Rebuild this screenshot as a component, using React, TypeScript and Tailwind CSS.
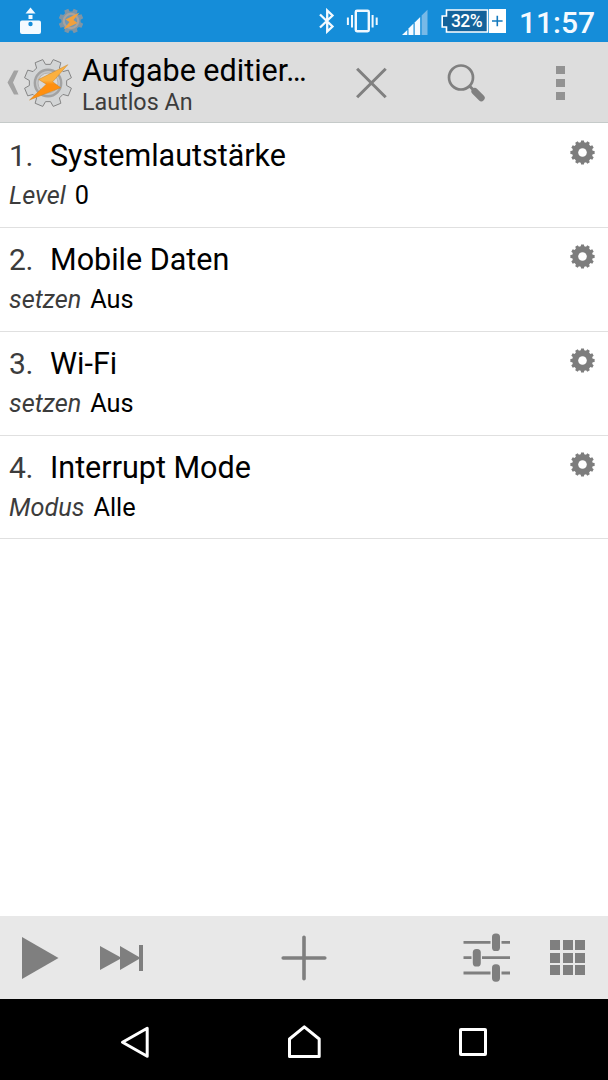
type Action = {
  title: string;
  label: string;
  value: string;
};

const actions: Action[] = [
  { title: "Systemlautstärke", label: "Level", value: "0" },
  { title: "Mobile Daten", label: "setzen", value: "Aus" },
  { title: "Wi-Fi", label: "setzen", value: "Aus" },
  { title: "Interrupt Mode", label: "Modus", value: "Alle" },
];

// outline of a cog wheel centred on 0,0
const cogPath = (teeth: number, outer: number, inner: number, offset = 0) => {
  const step = (Math.PI * 2) / teeth;
  const points: string[] = [];
  for (let i = 0; i < teeth; i++) {
    const a = i * step + offset;
    const corners = [
      [inner, -0.33],
      [outer, -0.22],
      [outer, 0.22],
      [inner, 0.33],
    ];
    corners.forEach(([r, t]) => {
      const x = r * Math.cos(a + t * step);
      const y = r * Math.sin(a + t * step);
      points.push(`${x.toFixed(2)} ${y.toFixed(2)}`);
    });
  }
  return `M${points.join("L")}Z`;
};

const TaskerLogo = ({ className }: { className: string }) => (
  <svg viewBox="-25 -25 50 50" className={className}>
    <defs>
      <linearGradient id="bolt" x1="0" y1="0" x2="0" y2="1">
        <stop offset="0.45" stopColor="#fbb040" />
        <stop offset="0.55" stopColor="#ff8f0f" />
      </linearGradient>
    </defs>
    <path
      d={cogPath(8, 24, 18.8, Math.PI / 8)}
      fill="#d3d5d6"
      stroke="#858585"
      strokeWidth="1"
      strokeLinejoin="round"
    />
    <circle r="13.2" fill="#c4c5c6" stroke="#a2a2a2" strokeWidth="2.4" />
    <circle r="10" fill="#d8d8d8" stroke="#b3b3b3" strokeWidth="1" />
    <path
      d="M19.8-18.3L-9.3-3.5L-1.7 1.2L-18.5 17L12.7 4.8L4.7-1.2Z"
      fill="url(#bolt)"
      stroke="#c98428"
      strokeWidth="0.5"
    />
  </svg>
);

const StatusBar = () => (
  <div className="flex h-[42px] items-center bg-[#158dd9] text-white">
    <svg viewBox="20 7 21 28" className="ml-5 h-7 w-[21px]" fill="#f4faff">
      <path d="M30.5 7.5L35.5 13.5H25.5Z" />
      <rect x="28.5" y="15" width="4" height="4" />
      <path
        fillRule="evenodd"
        d="M22 20.5H39Q41 20.5 41 22.5V32Q41 34 39 34H22Q20 34 20 32V22.5Q20 20.5 22 20.5ZM28.3 24A2.2 2.2 0 1 0 32.7 24A2.2 2.2 0 1 0 28.3 24Z"
      />
    </svg>
    <svg viewBox="-13 -13 26 26" className="ml-[17px] h-[26px] w-[26px]">
      <path d={cogPath(8, 12.5, 9.7, Math.PI / 8)} fill="#7f95a5" />
      <circle r="7.2" fill="#6f97b5" stroke="#a9a29c" strokeWidth="2.2" />
      <path d="M8.5-8.5L-5.5-1.5L-1.5 1L-7.5 8.5L6.5 2L2.5-1Z" fill="#f2a03c" />
    </svg>
    <svg
      viewBox="318 8 18 26"
      className="ml-[234px] h-[26px] w-[18px]"
      fill="none"
      stroke="#f4faff"
      strokeWidth="2.3"
    >
      <path d="M320 14.5L332.5 26.5L327.2 31.5V10.5L332.5 15.5L320 27.5" />
    </svg>
    <svg
      viewBox="346 8 33 26"
      className="ml-[10px] h-[26px] w-[33px]"
      fill="none"
      stroke="#f0f8ff"
      strokeWidth="2"
    >
      <rect x="355.8" y="10.8" width="13" height="20.5" rx="1.2" strokeWidth="2.4" />
      <path d="M347.9 17.5V25M352 15V27.5M372.6 15V27.5M376.7 17.5V25" />
    </svg>
    <svg viewBox="402 8 26 27" className="ml-[23px] h-[27px] w-[26px]" fill="#f4faff">
      <path d="M402 35L407.3 30V35Z" />
      <path d="M408.5 28.5L413.5 23.5V35H408.5Z" />
      <path d="M414.7 22.5L420.2 17V35H414.7Z" />
      <path d="M421.6 15.5L427.5 9.8V35H421.6Z" fill="#77b9e7" />
    </svg>
    <div className="relative ml-[13px] h-6 w-[65px]">
      <svg viewBox="441 9 65 24" className="h-6 w-[65px]">
        <path
          d="M446.5 10H487.5V32H446.5V27H442.2V16H446.5Z"
          fill="#14639b"
          stroke="white"
          strokeWidth="1.6"
        />
        <rect x="489" y="9" width="17" height="24" fill="white" />
        <path d="M492 21H502.6M497.3 15.7V26.3" stroke="#1479bd" strokeWidth="1.6" />
      </svg>
      <span className="absolute top-0 left-[10px] text-[17.5px] leading-6 font-medium tracking-[-0.6px]">
        32%
      </span>
    </div>
    <span className="ml-[13px] pt-[3px] text-[30px] leading-9 font-medium text-[#f4faff]">
      11:57
    </span>
  </div>
);

const Header = () => (
  <header className="flex h-[81px] items-center border-b border-[#c5cac9] bg-[#dddddd] pt-px">
    <svg viewBox="7 70 12 25" className="ml-[7px] h-[25px] w-3" fill="#a3a3a3">
      <path d="M14 70.5H18.5L13 82.5L18.5 94.5H14L7.5 82.5Z" />
    </svg>
    <TaskerLogo className="ml-1 h-[50px] w-[50px]" />
    <div className="ml-[9px] w-[240px] pt-[5px]">
      <h1 className="text-[30.5px] leading-[34px] whitespace-nowrap text-black">
        Aufgabe editier…
      </h1>
      <h2 className="text-[23.3px] leading-[29px] text-[#3c3c3c]">Lautlos An</h2>
    </div>
    <svg
      viewBox="0 0 32 32"
      className="ml-[33px] h-8 w-8"
      fill="none"
      stroke="#808080"
      strokeWidth="3"
    >
      <path d="M2.1 1.7L30.7 30.3M30.7 1.7L2.1 30.3" />
    </svg>
    <svg viewBox="447 63 39 39" className="ml-[60px] h-[39px] w-[39px]" fill="none" stroke="#808080">
      <circle cx="461" cy="77.5" r="12" strokeWidth="2.7" />
      <path d="M469.5 86L474 90.5" strokeWidth="3" />
      <path d="M474.8 91.3L481.3 97.8" strokeWidth="6.8" strokeLinecap="round" />
    </svg>
    <div className="ml-[70px] flex flex-col gap-[5px]">
      <span className="h-[8px] w-[9px] bg-[#929292]" />
      <span className="h-[8px] w-[9px] bg-[#929292]" />
      <span className="h-[8px] w-[9px] bg-[#929292]" />
    </div>
  </header>
);

const ActionRow = ({ action, index }: { action: Action; index: number }) => (
  <li className="flex h-[104px] justify-between border-b border-[#e0e0e0] pt-[13px] pr-[13px] pl-[9px] first:h-[105px] first:pt-[14px] last:h-[103px]">
    <div className="whitespace-nowrap">
      <div className="flex pt-px text-[30.5px] leading-9">
        <span className="w-[41px] text-[30px] tracking-[-0.4px] text-[#3c3c3c]">{index}.</span>
        <span className="text-black">{action.title}</span>
      </div>
      <div className="mt-[5px] flex gap-[9px] text-[25.3px] leading-[34px]">
        <span className="text-[#3c3c3c] italic">{action.label}</span>
        <span className="text-black">{action.value}</span>
      </div>
    </div>
    <svg viewBox="-12.5 -12.5 25 25" className="mt-[3px] h-[25px] w-[25px]">
      <path d={cogPath(12, 12.2, 10.3)} fill="#7d7d7d" />
      <circle r="4.3" fill="white" />
    </svg>
  </li>
);

const Toolbar = () => (
  <footer className="flex h-[83px] items-center bg-[#e8e8e8]">
    <svg viewBox="0 0 38 44" className="ml-[21px] h-11 w-[38px]" fill="#7f7f7f">
      <path d="M1 1L37.5 22L1 43Z" />
    </svg>
    <svg viewBox="0 0 44 28" className="ml-[41px] h-7 w-11" fill="#7f7f7f">
      <path d="M0 2L20 13V2L39 13V1H43V27H39V15L20 26V15L0 26Z" />
    </svg>
    <svg
      viewBox="0 0 46 46"
      className="ml-[137px] h-[46px] w-[46px]"
      stroke="#7f7f7f"
      strokeWidth="3.6"
      strokeLinecap="round"
    >
      <path d="M23 2.2V43.8M2.2 23H43.8" />
    </svg>
    <svg
      viewBox="463 933 48 50"
      className="ml-[136px] h-[50px] w-12"
      fill="#7f7f7f"
      stroke="#7f7f7f"
    >
      <path
        d="M463.5 942.3H490.5M501.5 942.3H510M463.5 957.7H471.5M482 957.7H510M463.5 973H490.5M501.5 973H510"
        strokeWidth="2.8"
      />
      <g stroke="none">
        <rect x="492" y="933.5" width="8" height="17.5" rx="3.6" />
        <rect x="472.8" y="949" width="8" height="17.5" rx="3.6" />
        <rect x="492" y="964.2" width="8" height="17.5" rx="3.6" />
      </g>
    </svg>
    <div className="ml-[39px] grid grid-cols-3 gap-[2.5px]">
      {Array.from({ length: 9 }, (_, i) => (
        <span key={i} className="h-[10px] w-[10px] bg-[#7f7f7f]" />
      ))}
    </div>
  </footer>
);

const NavigationBar = () => (
  <nav className="flex h-[81px] items-center bg-black pt-[5px]">
    <svg
      viewBox="120 1025 32 34"
      className="ml-[120px] h-[34px] w-8"
      fill="none"
      stroke="white"
      strokeWidth="3"
      strokeLinejoin="round"
    >
      <path d="M147.2 1028.3V1056.3L122.5 1042.3Z" />
    </svg>
    <svg
      viewBox="287 1024 35 36"
      className="ml-[135px] h-9 w-[35px]"
      fill="none"
      stroke="white"
      strokeWidth="3"
      strokeLinejoin="round"
    >
      <path d="M289.5 1056.5V1039L304.3 1026.8L319.2 1039V1056.5Z" />
    </svg>
    <span className="ml-[137px] h-7 w-7 rounded-[2px] border-3 border-white" />
  </nav>
);

export default function App() {
  return (
    <div className="flex h-[1080px] w-[608px] flex-col overflow-hidden bg-white font-['Roboto',sans-serif]">
      <StatusBar />
      <Header />
      <ul className="flex-1">
        {actions.map((action, i) => (
          <ActionRow key={action.title} action={action} index={i + 1} />
        ))}
      </ul>
      <Toolbar />
      <NavigationBar />
    </div>
  );
}
